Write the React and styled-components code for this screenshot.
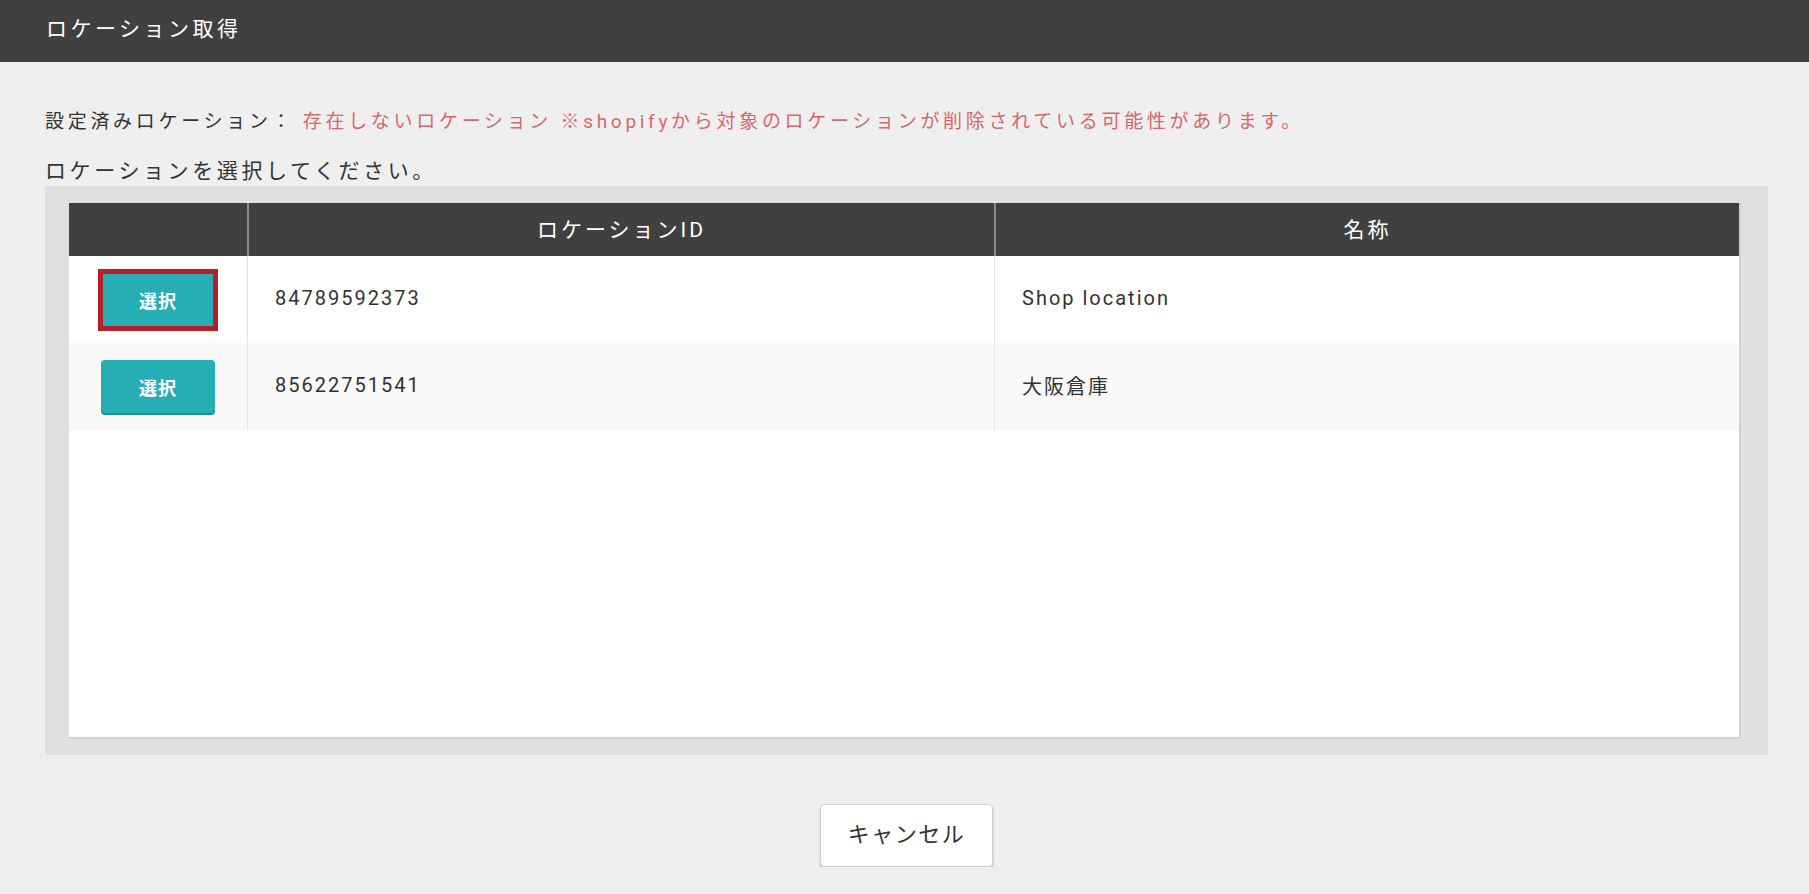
import React from "react";
import styled, { createGlobalStyle } from "styled-components";

const locations = [
  { id: "84789592373", name: "Shop location" },
  { id: "85622751541", name: "大阪倉庫" },
];

const GlobalStyle = createGlobalStyle`
  body {
    margin: 0;
    background: #efefef;
    font-family: Roboto, "Noto Sans CJK JP", sans-serif;
    color: #333;
  }
`;

const App = () => {
  return (
    <>
      <GlobalStyle />
      <TitleBar>ロケーション取得</TitleBar>
      <Main>
        <CurrentLine>
          設定済みロケーション：{" "}
          <Warning>
            存在しないロケーション ※shopifyから対象のロケーションが削除されている可能性があります。
          </Warning>
        </CurrentLine>
        <Prompt>ロケーションを選択してください。</Prompt>
        <Panel>
          <TableBox>
            <HeadRow>
              <HeadCell />
              <HeadCell>ロケーションID</HeadCell>
              <HeadCell>名称</HeadCell>
            </HeadRow>
            {locations.map((loc, i) => (
              <BodyRow key={loc.id} $striped={i % 2 === 1}>
                <ButtonCell>
                  <SelectButton $focused={i === 0}>選択</SelectButton>
                </ButtonCell>
                <TextCell>{loc.id}</TextCell>
                <TextCell>{loc.name}</TextCell>
              </BodyRow>
            ))}
          </TableBox>
        </Panel>
        <Footer>
          <CancelButton>キャンセル</CancelButton>
        </Footer>
      </Main>
    </>
  );
};

export default App;

const TitleBar = styled.header`
  display: flex;
  align-items: center;
  box-sizing: border-box;
  height: 62px;
  padding: 0 0 8px 46px;
  background: #404040;
  color: #fff;
  font-size: 21px;
  letter-spacing: 3.5px;
`;

const Main = styled.main`
  padding: 48px 41px 0 45px;
`;

const CurrentLine = styled.div`
  font-size: 19px;
  line-height: 24px;
  letter-spacing: 3.7px;
  color: #333;
`;

const Warning = styled.span`
  color: #d8676c;
`;

const Prompt = styled.div`
  margin-top: 25px;
  font-size: 21px;
  line-height: 24px;
  letter-spacing: 3.6px;
  color: #333;
`;

const Panel = styled.section`
  margin-top: 3px;
  padding: 17px 27px 16px 24px;
  background: #e0e0e0;
`;

const TableBox = styled.div`
  height: 536px;
  box-sizing: border-box;
  background: #fff;
  border-right: 2px solid #d2d2d2;
  border-bottom: 2px solid #d2d2d2;
`;

const HeadRow = styled.div`
  display: grid;
  grid-template-columns: 178px 747px 1fr;
  height: 53px;
  background: #404040;
`;

const HeadCell = styled.div`
  display: flex;
  align-items: center;
  justify-content: center;
  padding-bottom: 3px;
  color: #fff;
  font-size: 21px;
  letter-spacing: 3px;
  & + & {
    border-left: 2px solid #8a8a8a;
  }
`;

const BodyRow = styled.div`
  display: grid;
  grid-template-columns: 178px 747px 1fr;
  height: 87px;
  background: ${(p) => (p.$striped ? "#f9f9f9" : "#fff")};
`;

const ButtonCell = styled.div`
  display: flex;
  align-items: center;
  justify-content: center;
`;

const TextCell = styled.div`
  display: flex;
  align-items: center;
  padding: 0 0 3px 27px;
  border-left: 1px solid #e4e4e4;
  font-size: 20px;
  letter-spacing: 2px;
  color: #333;
`;

const SelectButton = styled.button`
  width: 114px;
  height: 53px;
  border: none;
  border-radius: 4px;
  background: #27adb4;
  color: #fff;
  font-family: "Noto Sans CJK JP", sans-serif;
  font-size: 18px;
  font-weight: 700;
  letter-spacing: 1px;
  box-shadow: 0 2px 0 #1e8f95;
  cursor: pointer;
  ${(p) =>
    p.$focused &&
    `
    width: 120px;
    height: 62px;
    border-radius: 0;
    border: 5px solid #b61f27;
    box-shadow: none;
  `}
`;

const Footer = styled.div`
  display: flex;
  justify-content: center;
  padding-top: 49px;
`;

const CancelButton = styled.button`
  width: 173px;
  height: 63px;
  padding: 0 0 7px;
  background: #fff;
  border: 1px solid #cfcfcf;
  border-radius: 4px;
  box-shadow: 0 2px 2px rgba(0, 0, 0, 0.22);
  color: #333;
  font-family: "Noto Sans CJK JP", sans-serif;
  font-size: 22px;
  letter-spacing: 1.5px;
  cursor: pointer;
`;
